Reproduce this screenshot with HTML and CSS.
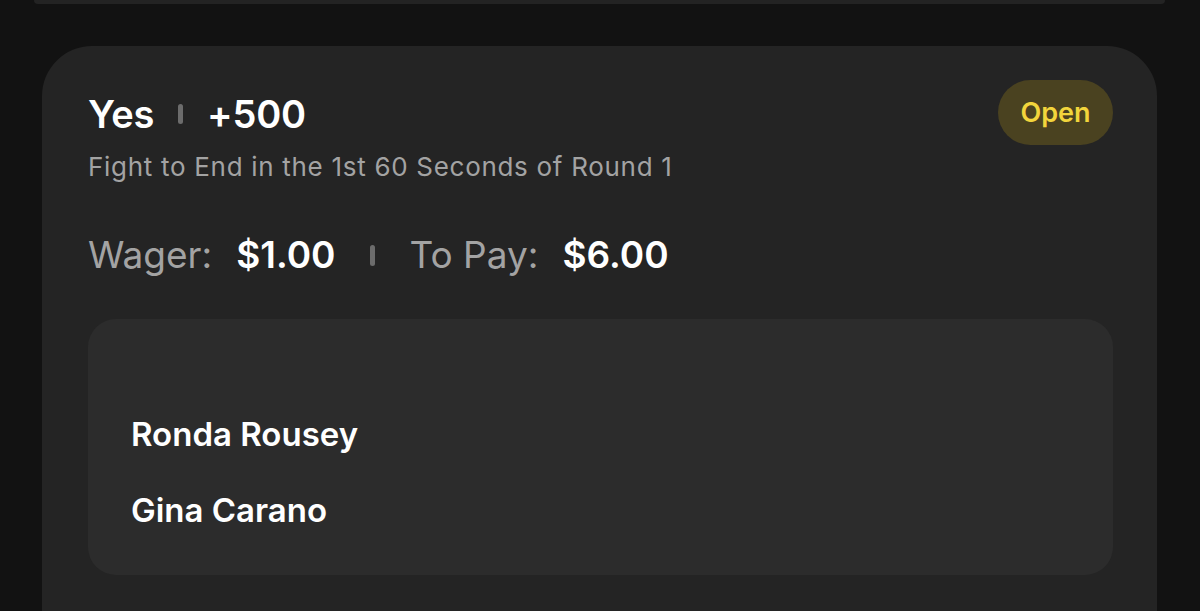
FILE: index.html
```html
<!DOCTYPE html>
<html>
<head>
<meta charset="utf-8">
<link rel="stylesheet" href="styles.css">
</head>
<body>
<div class="page">
  <div class="prev-card"></div>
  <div class="card">
    <div class="head">
      <div class="head-text">
        <div class="title"><span>Yes</span><span class="sep"></span><span>+500</span></div>
        <div class="subtitle">Fight to End in the 1st 60 Seconds of Round 1</div>
      </div>
      <div class="pill">Open</div>
    </div>
    <div class="amounts">
      <span class="label">Wager:</span><span class="value">$1.00</span>
      <span class="sep sep-sm"></span>
      <span class="label">To Pay:</span><span class="value">$6.00</span>
    </div>
    <div class="fighters">
      <div class="fighter">Ronda Rousey</div>
      <div class="fighter">Gina Carano</div>
    </div>
  </div>
</div>
</body>
</html>
```
FILE: styles.css
```css
html, body {
  margin: 0;
  padding: 0;
  background: #121212;
  font-family: Inter, "Noto Sans", sans-serif;
  color: #ffffff;
  overflow: hidden;
}
.page {
  width: 1200px;
  height: 611px;
  padding: 0 43px 0 42px;
  box-sizing: border-box;
  display: flex;
  flex-direction: column;
}
.prev-card {
  flex-shrink: 0;
  height: 4px;
  margin: 0 -8px;
  background: #232323;
  border-radius: 0 0 30px 30px;
}
.card {
  flex-shrink: 0;
  margin-top: 42px;
  background: #242424;
  border-radius: 50px 50px 0 0;
  padding: 34px 44px 40px 46px;
}
.head {
  display: flex;
  justify-content: space-between;
  align-items: flex-start;
}
.head-text {
  padding-top: 11px;
}
.title {
  display: flex;
  align-items: center;
  font-size: 38px;
  font-weight: 600;
  line-height: 46px;
  letter-spacing: -0.2px;
}
.sep {
  display: inline-block;
  width: 5px;
  height: 20px;
  border-radius: 2.5px;
  background: #6c6c6c;
  margin: 0 24px;
}
.subtitle {
  margin-top: 14px;
  font-size: 26px;
  line-height: 32px;
  color: #a3a3a3;
  letter-spacing: 0.7px;
}
.pill {
  background: #4a4220;
  color: #f2d53c;
  font-size: 27px;
  font-weight: 600;
  height: 65px;
  width: 115px;
  border-radius: 33px;
  display: flex;
  align-items: center;
  justify-content: center;
}
.amounts {
  margin-top: 50px;
  display: flex;
  align-items: center;
  font-size: 37px;
  line-height: 44px;
}
.label {
  color: #a3a3a3;
  font-weight: 400;
  margin-right: 24px;
}
.value {
  font-weight: 600;
}
.sep-sm {
  margin: 0 35px 0 34px;
  height: 21px;
}
.fighters {
  margin-top: 42px;
  background: #2c2c2c;
  border-radius: 28px;
  height: 256px;
  box-sizing: border-box;
  padding: 95px 43px 0;
  display: flex;
  flex-direction: column;
  gap: 36px;
}
.fighter {
  font-size: 33px;
  font-weight: 600;
  line-height: 40px;
}
```
